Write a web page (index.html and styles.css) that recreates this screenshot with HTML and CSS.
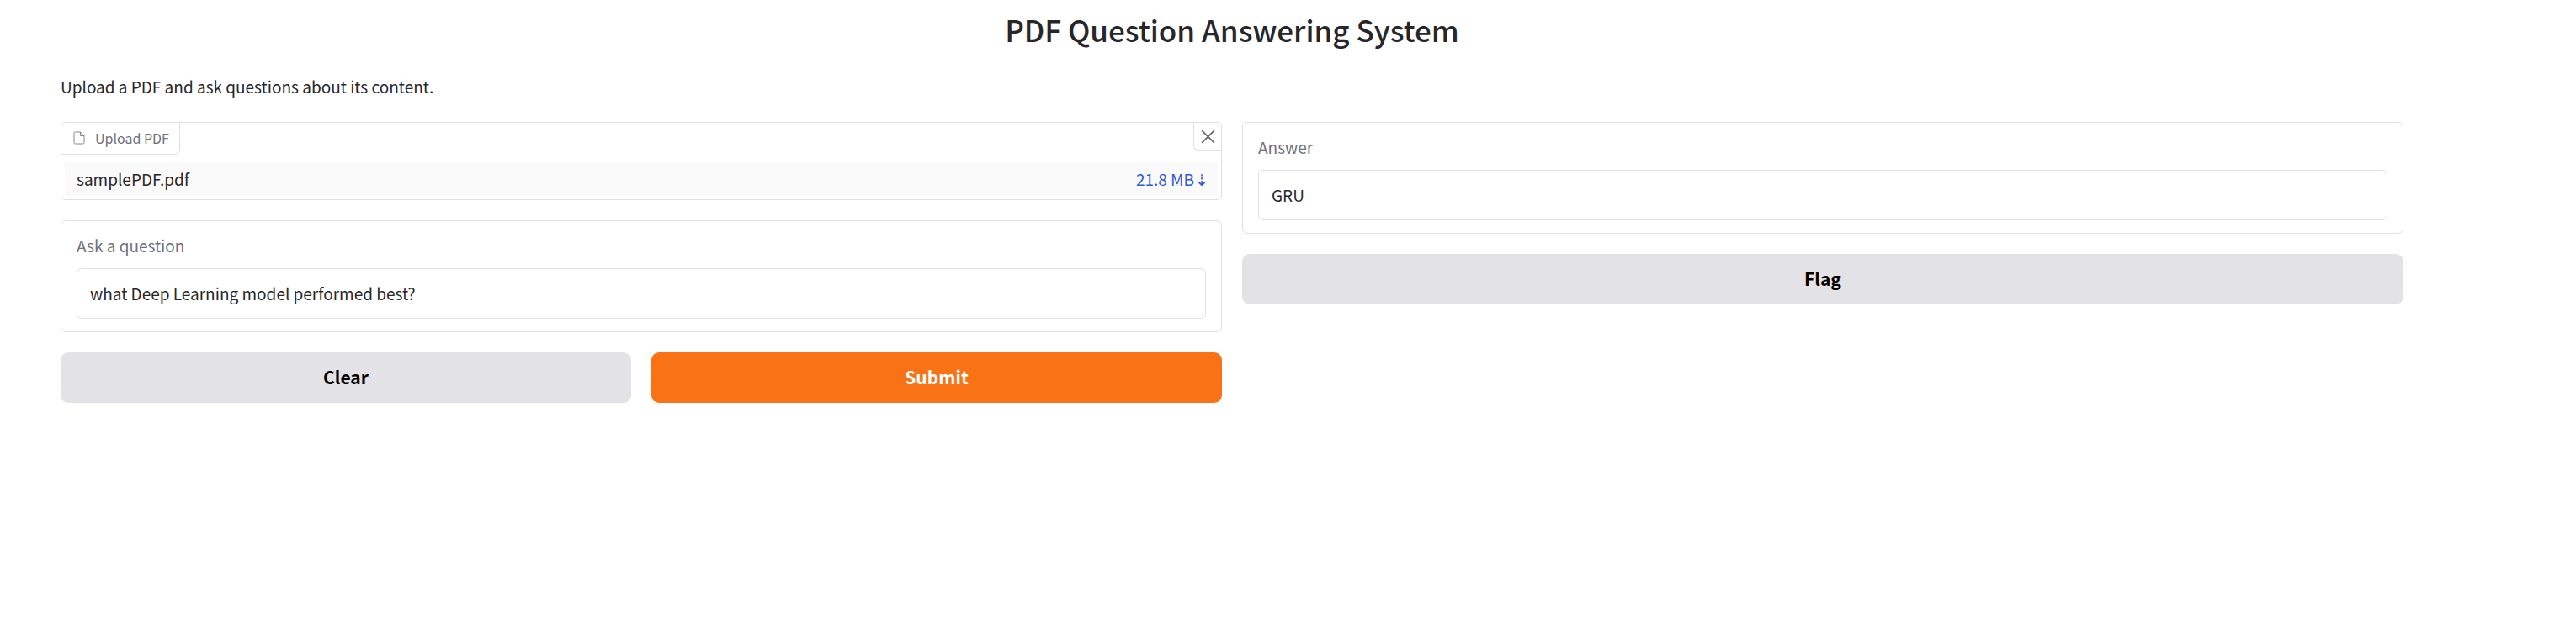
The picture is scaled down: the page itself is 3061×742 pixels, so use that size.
FILE: index.html
```html
<!DOCTYPE html>
<html lang="en">
<head>
<meta charset="utf-8">
<title>PDF Question Answering System</title>
<link rel="stylesheet" href="styles.css">
</head>
<body>
<main class="app">
  <h1 class="title">PDF Question Answering System</h1>
  <p class="description">Upload a PDF and ask questions about its content.</p>
  <div class="columns">
    <form class="column">
      <section class="block file-block" aria-labelledby="file-label">
        <div class="file-head">
          <div class="file-label" id="file-label">
            <svg class="file-icon" viewBox="0 0 14 16" aria-hidden="true"><path d="M2.500 1H8.500L13 5.500V13.500A1.500 1.500 0 0 1 11.500 15H2.500A1.500 1.500 0 0 1 1 13.500V2.500A1.500 1.500 0 0 1 2.500 1ZM8.500 1V5.500H13"/></svg>
            <span>Upload PDF</span>
          </div>
          <button class="close" type="button" aria-label="Remove file">
            <svg class="close-icon" viewBox="0 0 16 16" aria-hidden="true"><path d="M1 1L15 15M15 1L1 15"/></svg>
          </button>
        </div>
        <div class="file-row">
          <span>samplePDF.pdf</span>
          <a class="download" href="#"><span>21.8 MB</span><span>⇣</span></a>
        </div>
      </section>
      <div class="block field">
        <label class="label" for="question">Ask a question</label>
        <input class="input" id="question" type="text" value="what Deep Learning model performed best?">
      </div>
      <div class="actions">
        <button class="button" type="button">Clear</button>
        <button class="button primary" type="button">Submit</button>
      </div>
    </form>
    <div class="column">
      <div class="block field">
        <label class="label" for="answer">Answer</label>
        <input class="input" id="answer" type="text" value="GRU" readonly>
      </div>
      <button class="button" type="button">Flag</button>
    </div>
  </div>
</main>
</body>
</html>
```
FILE: styles.css
```css
* {
  box-sizing: border-box;
}

body {
  margin: 0;
  background: #fff;
  color: #27272a;
  font: 19px/30px "Noto Sans CJK SC", "Noto Sans", sans-serif;
}

.app {
  padding: 11px 205px 24px 72px;
}

.title {
  margin: 0 0 32px;
  font-size: 35px;
  font-weight: 500;
  line-height: 48px;
  text-align: center;
}

.description {
  margin: 0 0 30px;
  line-height: 24px;
}

.columns {
  display: grid;
  grid-template-columns: 1fr 1fr;
  gap: 24px;
  align-items: start;
}

.column {
  display: flex;
  flex-direction: column;
  gap: 24px;
}

.block {
  border: 1px solid #e0e0e3;
  border-radius: 6px;
  background: #fff;
}

.file-block {
  padding-bottom: 4px;
  overflow: hidden;
}

.file-head {
  display: flex;
  justify-content: space-between;
  align-items: flex-start;
  margin-bottom: 9px;
}

.file-label {
  display: flex;
  align-items: center;
  gap: 12px;
  height: 38px;
  padding: 0 12px 2px 14px;
  border: solid #e0e0e3;
  border-width: 0 1px 1px 0;
  border-radius: 0 0 6px 0;
  color: #71717a;
  font-size: 16px;
}

.file-icon {
  width: 14px;
  height: 16px;
  fill: none;
  stroke: #85858d;
}

.close {
  display: flex;
  justify-content: center;
  align-items: center;
  width: 33px;
  height: 33px;
  padding: 0;
  border: solid #e0e0e3;
  border-width: 0 0 1px 1px;
  border-radius: 0 0 0 6px;
  background: #fff;
}

.close-icon {
  width: 17px;
  height: 17px;
  fill: none;
  stroke: #66666c;
  stroke-width: 1.500;
}

.file-row {
  display: flex;
  justify-content: space-between;
  align-items: center;
  height: 40px;
  margin: 0 4px;
  padding: 0 11px 0 14px;
  background: #fafafa;
}

.download {
  display: flex;
  gap: 1px;
  color: #2d5bd7;
  text-decoration: none;
}

.field {
  display: flex;
  flex-direction: column;
  gap: 12px;
  padding: 14px 18px 15px;
}

.label {
  color: #71717a;
}

.input {
  width: 100%;
  height: 60px;
  padding: 0 15px 2px;
  border: 1px solid #e0e0e3;
  border-radius: 6px;
  background: #fff;
  color: #27272a;
  font: inherit;
}

.actions {
  display: grid;
  grid-template-columns: 1fr 1fr;
  gap: 24px;
}

.button {
  width: 100%;
  height: 60px;
  padding: 0 0 2px;
  border: 0;
  border-radius: 9px;
  background: #e3e2e7;
  color: #000;
  font: inherit;
  font-size: 21px;
  font-weight: 700;
}

.primary {
  background: #f97316;
  color: #fff;
}
```
